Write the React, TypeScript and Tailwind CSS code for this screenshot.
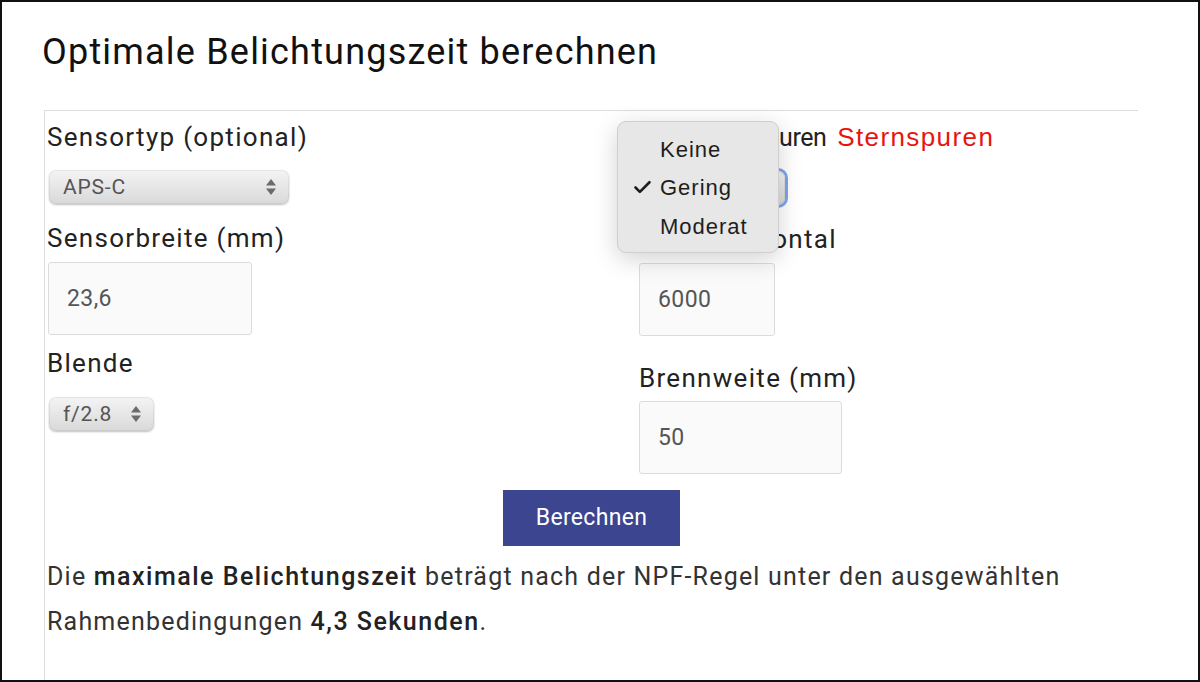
import { Check } from "lucide-react"

function Arrows() {
  return (
    <svg width="12" height="20" viewBox="0 0 12 20" className="shrink-0">
      <path d="M6 2 L11 8.5 L1 8.5 Z" fill="#6b6b6b" />
      <path d="M6 18 L11 11.5 L1 11.5 Z" fill="#6b6b6b" />
    </svg>
  )
}

function IosSelect({ value, width, focus }: { value: string; width: string; focus?: boolean }) {
  return (
    <div
      className={`${width} h-[34px] flex items-center justify-between pl-[14px] pr-[12px] rounded-[7px] bg-gradient-to-b from-[#f4f4f4] to-[#d9d9d9] shadow-[0_1px_2px_rgba(0,0,0,0.25),inset_0_0_0_1px_rgba(0,0,0,0.06)] text-[21px] tracking-[0.8px] text-[#555] ${
        focus ? "ring-[3px] ring-[#7ea5ea]" : ""
      }`}
    >
      <span>{value}</span>
      <Arrows />
    </div>
  )
}

function TextField({ value, width }: { value: string; width: string }) {
  return (
    <div className={`${width} h-[73px] flex items-center pl-[18px] bg-[#fafafa] border border-[#dcdcdc] rounded-[3px] text-[23px] tracking-[0.4px] text-[#555]`}>
      {value}
    </div>
  )
}

export default function App() {
  return (
    <div className="relative w-[1200px] h-[682px] overflow-hidden border-2 border-[#111] bg-white font-['Roboto',sans-serif] text-[#222]">
      <h1 className="pl-[40px] pt-[28px] text-[36px] leading-[44px] tracking-[1.2px] text-[#111] font-normal">
        Optimale Belichtungszeit berechnen
      </h1>

      <div className="ml-[42px] mt-[36px] w-[1094px] h-[600px] border-l border-t border-[#dcdcdc]">
        <div className="grid grid-cols-[592px_1fr] pl-[2px] text-[26px] leading-[30px] tracking-[1.3px]">
          {/* left column */}
          <div className="flex flex-col">
            <label className="mt-[11px]">Sensortyp (optional)</label>
            <div className="mt-[18px] ml-[2px]">
              <IosSelect value="APS-C" width="w-[240px]" />
            </div>
            <label className="mt-[19px]">Sensorbreite (mm)</label>
            <div className="mt-[9px] ml-[1px]">
              <TextField value="23,6" width="w-[204px]" />
            </div>
            <label className="mt-[13px]">Blende</label>
            <div className="mt-[19px] ml-[2px]">
              <IosSelect value="f/2.8" width="w-[105px]" />
            </div>
          </div>

          {/* right column */}
          <div className="flex flex-col">
            <div className="mt-[11px] flex items-baseline">
              <label className="text-[25px] tracking-[-0.5px]">Max. Sternspuren</label>
              <span className="ml-[11px] text-[26px] tracking-[1.4px] text-[#e8140f] font-['Liberation_Sans',Arial,sans-serif]">
                Sternspuren
              </span>
            </div>
            <div className="mt-[18px]">
              <IosSelect value="Gering" width="w-[146px]" focus />
            </div>
            <label className="mt-[19px]">Pixel horizontal</label>
            <div className="mt-[9px]">
              <TextField value="6000" width="w-[136px]" />
            </div>
            <label className="mt-[27px]">Brennweite (mm)</label>
            <div className="mt-[8px]">
              <TextField value="50" width="w-[203px]" />
            </div>
          </div>
        </div>

        <div className="flex justify-center mt-[16px]">
          <button className="w-[177px] h-[56px] bg-[#3b4590] text-white text-[23px] tracking-[0.3px]">Berechnen</button>
        </div>

        <p className="mt-[8px] pl-[2px] text-[25px] leading-[45px] tracking-[1.2px] text-[#333]">
          Die <b className="font-medium tracking-[1.5px] text-[#222]">maximale Belichtungszeit</b> beträgt nach der
          NPF-Regel unter den ausgewählten
          <br />
          Rahmenbedingungen <b className="font-medium tracking-[1.5px] text-[#222]">4,3 Sekunden</b>.
        </p>
      </div>

      {/* open select menu */}
      <div className="absolute left-[615px] top-[119px] w-[162px] h-[132px] rounded-[9px] bg-[#e7e7e7] border border-[#cfcfcf] shadow-[0_6px_24px_rgba(0,0,0,0.18)] pt-[8px] font-['Liberation_Sans',Arial,sans-serif] text-[22px] tracking-[1px] text-[#1e1e1e]">
        <div className="h-[38.5px] flex items-center pl-[42px]">Keine</div>
        <div className="relative h-[38.5px] flex items-center pl-[42px]">
          <Check className="absolute left-[14px] w-[21px] h-[21px]" strokeWidth={3} />
          Gering
        </div>
        <div className="h-[38.5px] flex items-center pl-[42px]">Moderat</div>
      </div>
    </div>
  )
}
